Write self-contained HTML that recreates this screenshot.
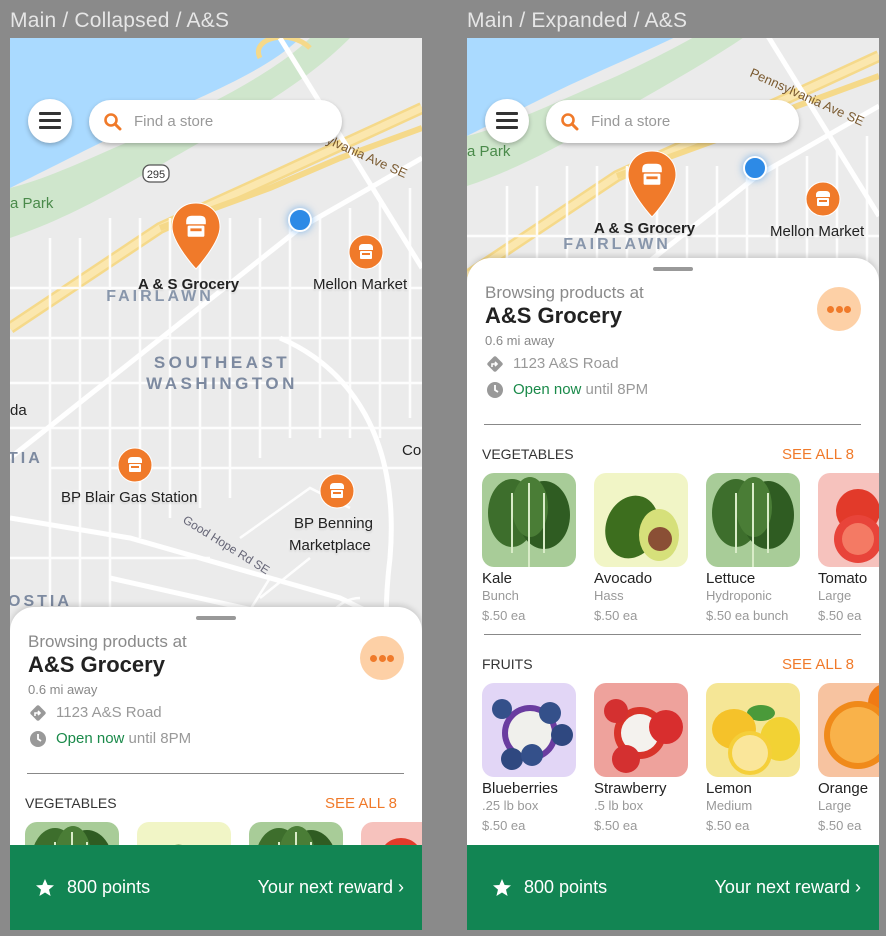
<!DOCTYPE html>
<html><head><meta charset="utf-8">
<style>
*{box-sizing:border-box;margin:0;padding:0}
body{width:886px;height:936px;background:#8a8a8a;font-family:"Liberation Sans",sans-serif;position:relative;overflow:hidden}
.title{position:absolute;top:9px;font-size:21px;color:#e6e6e6;letter-spacing:0.2px}
.frame{position:absolute;top:38px;width:412px;height:892px;overflow:hidden;background:#ebebeb}
.map{position:absolute;left:0;width:412px;height:944px}
.menu{position:absolute;left:18px;top:61px;width:44px;height:44px;border-radius:50%;background:#fff;box-shadow:0 2px 5px rgba(0,0,0,.25)}
.menu i{position:absolute;left:11px;width:22px;height:3px;background:#333;border-radius:1px}
.search{position:absolute;left:79px;top:62px;width:253px;height:43px;border-radius:22px;background:#fff;box-shadow:0 2px 5px rgba(0,0,0,.25);font-size:15px;color:#999;padding:13px 0 0 45px}
.search svg{position:absolute;left:14px;top:12px}
.lbl{position:absolute;font-size:15px;color:#222;text-shadow:0 0 3px #fff,0 0 3px #fff,0 1px 2px rgba(0,0,0,.3);white-space:nowrap}
.sheet{position:absolute;left:0;width:412px;background:#fff;border-radius:24px 24px 0 0;box-shadow:0 -2px 6px rgba(0,0,0,.15);overflow:hidden}
.handle{position:absolute;left:186px;top:9px;width:40px;height:4px;border-radius:2px;background:#999}
.t1{position:absolute;left:18px;top:25px;font-size:17px;color:#8a8a8a}
.t2{position:absolute;left:18px;top:45px;font-size:22px;color:#222;font-weight:bold}
.t3{position:absolute;left:18px;top:75px;font-size:13px;color:#888}
.t4{position:absolute;left:46px;top:97px;font-size:15px;color:#999}
.t5{position:absolute;left:46px;top:123px;font-size:15px;color:#999}
.t5 b{font-weight:normal;color:#1a8a4a}
.ico{position:absolute;left:19px}
.more{position:absolute;left:350px;top:29px;width:44px;height:44px;border-radius:50%;background:#fdd0a6}
.more i{position:absolute;top:19px;width:7px;height:7px;border-radius:50%;background:#f07a2a}
.div{position:absolute;left:17px;width:377px;height:1px;background:#888}
.sec{position:absolute;left:15px;font-size:14px;color:#333}
.see{position:absolute;right:25px;font-size:15px;color:#f07a2a}
.card{position:absolute;width:110px}
.card svg{display:block;border-radius:12px}
.card .n{font-size:15px;color:#222;margin-top:3px;white-space:nowrap}
.card .s{font-size:13px;color:#999;margin-top:1px;white-space:nowrap}
.card .p{font-size:13px;color:#999;margin-top:5px;white-space:nowrap}
.foot{position:absolute;left:0;top:807px;width:412px;height:85px;background:#128553;color:#fff;font-size:18px}
.foot .a{position:absolute;left:57px;top:32px}
.foot .b{position:absolute;right:18px;top:32px}
.foot svg{position:absolute;left:25px;top:33px}
</style></head><body>
<svg width="0" height="0" style="position:absolute">
<defs>
<symbol id="map" viewBox="0 0 412 944">
<rect width="412" height="944" fill="#ebebeb"/>
<path d="M0 0H290C250 40 160 70 80 110 50 125 20 140 0 150Z" fill="#aadaff"/>
<path d="M0 150C40 140 80 120 150 90 210 62 270 30 300 0H340C300 40 250 70 180 110 110 150 60 180 0 200Z" fill="#cfe6cc"/>
<path d="M0 290L150 190 260 140 412 70" stroke="#f5d98a" stroke-width="12" fill="none"/>
<path d="M0 290L150 190 260 140 412 70" stroke="#fbe7ae" stroke-width="7" fill="none"/>
<path d="M150 190L260 150 330 120 412 90" stroke="#f5d98a" stroke-width="6" fill="none"/>
<path d="M250 20C240 0 280 -10 300 10" stroke="#f5d98a" stroke-width="5" fill="none"/>
<g stroke="#fff" stroke-width="5" fill="none">
<path d="M0 420L290 190 412 120"/><path d="M270 0L412 230"/><path d="M100 540L412 610"/><path d="M0 480L120 500 330 560 412 600"/>
<path d="M270 300C340 330 390 400 380 520 370 600 380 700 412 760"/><path d="M0 700L412 870"/>
</g>
<g stroke="#fff" stroke-width="2.5" fill="none" opacity="0.9">
<path d="M0 250H412M0 300H412M0 345H412M0 390H412M40 430H412M0 520H200M0 600H300M0 650H250"/>
<path d="M40 200V900M70 200V700M100 180V600M130 180V500M160 180V480M190 180V470M220 180V460M250 180V420M280 180V400M310 180V400M340 170V400M370 160V400M400 150V380"/>
<path d="M230 500L300 450 340 470M250 560L300 520M210 620L260 540M300 620C310 580 330 560 350 560M340 700C330 650 360 620 380 630"/>
</g>
<text x="212" y="330" text-anchor="middle" font-family="Liberation Sans" font-weight="bold" font-size="17" letter-spacing="3.5" fill="#7d8aa0">SOUTHEAST</text>
<text x="212" y="351" text-anchor="middle" font-family="Liberation Sans" font-weight="bold" font-size="17" letter-spacing="3.5" fill="#7d8aa0">WASHINGTON</text>
<text x="150" y="263" text-anchor="middle" font-family="Liberation Sans" font-weight="bold" font-size="16" letter-spacing="3" fill="#8896ab">FAIRLAWN</text>
<text x="-2" y="425" font-family="Liberation Sans" font-weight="bold" font-size="16" letter-spacing="3" fill="#7d8aa0">TIA</text>
<text x="-2" y="568" font-family="Liberation Sans" font-weight="bold" font-size="16" letter-spacing="3" fill="#7d8aa0">OSTIA</text>
<text x="0" y="170" font-family="Liberation Sans" font-size="15" fill="#4a8a4a">a Park</text>
<text x="0" y="377" font-family="Liberation Sans" font-size="15" fill="#222">da</text>
<text x="392" y="417" font-family="Liberation Sans" font-size="15" fill="#222">Co</text>
<text x="282" y="90" transform="rotate(24 282 90)" font-family="Liberation Sans" font-size="13" fill="#7a5a30">Pennsylvania Ave SE</text>
<text x="172" y="484" transform="rotate(32 172 484)" font-family="Liberation Sans" font-size="12" fill="#667">Good Hope Rd SE</text>
<rect x="133" y="127" width="26" height="17" rx="7" fill="#fff" stroke="#555" stroke-width="1.3"/>
<text x="146" y="140" text-anchor="middle" font-family="Liberation Sans" font-size="11" fill="#333">295</text>
</symbol>
<symbol id="shop" viewBox="0 0 20 20"><path d="M3 6Q3 2 7 2H13Q17 2 17 6V8H3Z" fill="#fff"/><rect x="4" y="9" width="12" height="8" rx="1" fill="#fff"/><rect x="6" y="11" width="8" height="2" fill="#f07a2a"/></symbol>
<symbol id="kale" viewBox="0 0 94 94"><rect width="94" height="94" fill="#a8cc98"/><ellipse cx="30" cy="40" rx="24" ry="34" fill="#3d6e2c"/><ellipse cx="62" cy="42" rx="26" ry="34" fill="#2f5c22"/><ellipse cx="48" cy="34" rx="18" ry="30" fill="#4a7d36"/><path d="M47 10V94M30 20V80M62 20V80" stroke="#d9ecc8" stroke-width="2"/></symbol>
<symbol id="avo" viewBox="0 0 94 94"><rect width="94" height="94" fill="#f1f5c6"/><ellipse cx="38" cy="54" rx="26" ry="32" fill="#3d6e1e" transform="rotate(20 38 54)"/><ellipse cx="65" cy="62" rx="20" ry="26" fill="#d6e07a"/><circle cx="66" cy="66" r="12" fill="#8a4f35"/></symbol>
<symbol id="tom" viewBox="0 0 94 94"><rect width="94" height="94" fill="#f6c2bd"/><circle cx="40" cy="38" r="22" fill="#e23a2a"/><circle cx="40" cy="66" r="24" fill="#e8443a"/><circle cx="40" cy="66" r="16" fill="#f47a64"/><circle cx="88" cy="50" r="18" fill="#d9302a"/></symbol>
<symbol id="blue" viewBox="0 0 94 94"><rect width="94" height="94" fill="#e2d6f6"/><circle cx="48" cy="50" r="28" fill="#6a3ca0"/><circle cx="48" cy="50" r="22" fill="#f0f0ec"/><circle cx="20" cy="26" r="10" fill="#34508a"/><circle cx="68" cy="30" r="11" fill="#34508a"/><circle cx="80" cy="52" r="11" fill="#2f4880"/><circle cx="30" cy="76" r="11" fill="#2f4880"/><circle cx="50" cy="72" r="11" fill="#34508a"/></symbol>
<symbol id="straw" viewBox="0 0 94 94"><rect width="94" height="94" fill="#eea29c"/><circle cx="46" cy="50" r="26" fill="#d8342a"/><circle cx="46" cy="50" r="19" fill="#f4f2ee"/><circle cx="22" cy="28" r="12" fill="#d43030"/><circle cx="72" cy="44" r="17" fill="#d82e2e"/><circle cx="32" cy="76" r="14" fill="#d43030"/></symbol>
<symbol id="lemon" viewBox="0 0 94 94"><rect width="94" height="94" fill="#f5e696"/><ellipse cx="55" cy="30" rx="14" ry="8" fill="#4a9a3a"/><ellipse cx="28" cy="46" rx="22" ry="20" fill="#f5c22a"/><ellipse cx="74" cy="56" rx="20" ry="22" fill="#f2d234"/><circle cx="44" cy="70" r="22" fill="#f5cf3a"/><circle cx="44" cy="70" r="18" fill="#fae69a"/></symbol>
<symbol id="orange" viewBox="0 0 94 94"><rect width="94" height="94" fill="#f7c3a0"/><circle cx="70" cy="20" r="20" fill="#f07a14"/><circle cx="40" cy="52" r="34" fill="#f08a1a"/><circle cx="40" cy="52" r="28" fill="#f9b24a"/></symbol>
</defs></svg>

<div class="title" style="left:10px">Main / Collapsed / A&amp;S</div>
<div class="title" style="left:467px">Main / Expanded / A&amp;S</div>

<!-- LEFT -->
<div class="frame" style="left:10px">
<svg class="map" style="top:0" width="412" height="944" viewBox="0 0 412 944"><use href="#map" x="0" y="0" width="412" height="944"/></svg>
<div style="position:absolute;left:278px;top:170px;width:24px;height:24px;border-radius:50%;background:#2d8ae6;border:2px solid #fff;box-shadow:0 0 8px rgba(45,138,230,.6)"></div>
<svg style="position:absolute;left:160px;top:163px" width="52" height="70" viewBox="0 0 52 70"><path d="M26 2C12 2 2 12 2 26 2 42 26 68 26 68S50 42 50 26C50 12 40 2 26 2Z" fill="#f07a2a" stroke="#fff" stroke-width="1"/><use href="#shop" x="12" y="12" width="28" height="28"/></svg>
<div class="lbl" style="left:128px;top:238px;font-weight:bold">A &amp; S Grocery</div>
<svg style="position:absolute;left:338px;top:196px" width="36" height="36"><circle cx="18" cy="18" r="17" fill="#f07a2a" stroke="#fff"/><use href="#shop" x="8" y="8" width="20" height="20"/></svg>
<div class="lbl" style="left:303px;top:238px">Mellon Market</div>
<svg style="position:absolute;left:107px;top:409px" width="36" height="36"><circle cx="18" cy="18" r="17" fill="#f07a2a" stroke="#fff"/><use href="#shop" x="8" y="8" width="20" height="20"/></svg>
<div class="lbl" style="left:51px;top:451px">BP Blair Gas Station</div>
<svg style="position:absolute;left:309px;top:435px" width="36" height="36"><circle cx="18" cy="18" r="17" fill="#f07a2a" stroke="#fff"/><use href="#shop" x="8" y="8" width="20" height="20"/></svg>
<div class="lbl" style="left:284px;top:477px">BP Benning</div>
<div class="lbl" style="left:279px;top:499px">Marketplace</div>
<div class="menu"><i style="top:13px"></i><i style="top:20px"></i><i style="top:27px"></i></div>
<div class="search"><svg width="20" height="20" viewBox="0 0 20 20"><circle cx="8" cy="8" r="5.5" stroke="#f07a2a" stroke-width="2.6" fill="none"/><path d="M12 12L17 17" stroke="#f07a2a" stroke-width="3" stroke-linecap="round"/></svg>Find a store</div>
<div class="sheet" style="top:569px;height:240px">
<div class="handle"></div>
<div class="t1">Browsing products at</div>
<div class="t2">A&amp;S Grocery</div>
<div class="t3">0.6 mi away</div>
<svg class="ico" style="top:97px" width="18" height="18" viewBox="0 0 18 18"><rect x="3" y="3" width="12" height="12" rx="2" transform="rotate(45 9 9)" fill="#999"/><path d="M6 12V9H11M9 7L11 9 9 11" stroke="#fff" stroke-width="1.6" fill="none"/></svg>
<div class="t4">1123 A&amp;S Road</div>
<svg class="ico" style="top:123px" width="18" height="18" viewBox="0 0 18 18"><circle cx="9" cy="9" r="8" fill="#999"/><path d="M9 4V9L12 11" stroke="#fff" stroke-width="1.8" fill="none"/></svg>
<div class="t5"><b>Open now</b> until 8PM</div>
<div class="more"><i style="left:10px"></i><i style="left:18.5px"></i><i style="left:27px"></i></div>
<div class="div" style="top:166px"></div>
<div class="sec" style="top:188px">VEGETABLES</div>
<div class="see" style="top:188px">SEE ALL 8</div>
<div class="card" style="left:15px;top:215px"><svg width="94" height="94"><use href="#kale"/></svg></div>
<div class="card" style="left:127px;top:215px"><svg width="94" height="94"><use href="#avo"/></svg></div>
<div class="card" style="left:239px;top:215px"><svg width="94" height="94"><use href="#kale"/></svg></div>
<div class="card" style="left:351px;top:215px"><svg width="94" height="94"><use href="#tom"/></svg></div>
</div>
<div class="foot"><svg width="20" height="20" viewBox="0 0 20 20"><path d="M10 1L12.6 7 19 7.4 14 11.6 15.6 18 10 14.5 4.4 18 6 11.6 1 7.4 7.4 7Z" fill="#fff"/></svg><span class="a">800 points</span><span class="b">Your next reward &#8250;</span></div>
</div>

<!-- RIGHT -->
<div class="frame" style="left:467px">
<svg class="map" style="top:-52px" width="412" height="944" viewBox="0 0 412 944"><use href="#map" x="0" y="0" width="412" height="944"/></svg>
<div style="position:absolute;left:276px;top:118px;width:24px;height:24px;border-radius:50%;background:#2d8ae6;border:2px solid #fff;box-shadow:0 0 8px rgba(45,138,230,.6)"></div>
<svg style="position:absolute;left:159px;top:111px" width="52" height="70" viewBox="0 0 52 70"><path d="M26 2C12 2 2 12 2 26 2 42 26 68 26 68S50 42 50 26C50 12 40 2 26 2Z" fill="#f07a2a" stroke="#fff" stroke-width="1"/><use href="#shop" x="12" y="12" width="28" height="28"/></svg>
<div class="lbl" style="left:127px;top:182px;font-weight:bold">A &amp; S Grocery</div>
<svg style="position:absolute;left:338px;top:143px" width="36" height="36"><circle cx="18" cy="18" r="17" fill="#f07a2a" stroke="#fff"/><use href="#shop" x="8" y="8" width="20" height="20"/></svg>
<div class="lbl" style="left:303px;top:185px">Mellon Market</div>
<div class="menu"><i style="top:13px"></i><i style="top:20px"></i><i style="top:27px"></i></div>
<div class="search"><svg width="20" height="20" viewBox="0 0 20 20"><circle cx="8" cy="8" r="5.5" stroke="#f07a2a" stroke-width="2.6" fill="none"/><path d="M12 12L17 17" stroke="#f07a2a" stroke-width="3" stroke-linecap="round"/></svg>Find a store</div>
<div class="sheet" style="top:220px;height:590px">
<div class="handle"></div>
<div class="t1">Browsing products at</div>
<div class="t2">A&amp;S Grocery</div>
<div class="t3">0.6 mi away</div>
<svg class="ico" style="top:97px" width="18" height="18" viewBox="0 0 18 18"><rect x="3" y="3" width="12" height="12" rx="2" transform="rotate(45 9 9)" fill="#999"/><path d="M6 12V9H11M9 7L11 9 9 11" stroke="#fff" stroke-width="1.6" fill="none"/></svg>
<div class="t4">1123 A&amp;S Road</div>
<svg class="ico" style="top:123px" width="18" height="18" viewBox="0 0 18 18"><circle cx="9" cy="9" r="8" fill="#999"/><path d="M9 4V9L12 11" stroke="#fff" stroke-width="1.8" fill="none"/></svg>
<div class="t5"><b>Open now</b> until 8PM</div>
<div class="more"><i style="left:10px"></i><i style="left:18.5px"></i><i style="left:27px"></i></div>
<div class="div" style="top:166px"></div>
<div class="sec" style="top:188px">VEGETABLES</div>
<div class="see" style="top:188px">SEE ALL 8</div>
<div class="card" style="left:15px;top:215px"><svg width="94" height="94"><use href="#kale"/></svg><div class="n">Kale</div><div class="s">Bunch</div><div class="p">$.50 ea</div></div>
<div class="card" style="left:127px;top:215px"><svg width="94" height="94"><use href="#avo"/></svg><div class="n">Avocado</div><div class="s">Hass</div><div class="p">$.50 ea</div></div>
<div class="card" style="left:239px;top:215px"><svg width="94" height="94"><use href="#kale"/></svg><div class="n">Lettuce</div><div class="s">Hydroponic</div><div class="p">$.50 ea bunch</div></div>
<div class="card" style="left:351px;top:215px"><svg width="94" height="94"><use href="#tom"/></svg><div class="n">Tomato</div><div class="s">Large</div><div class="p">$.50 ea</div></div>
<div class="div" style="top:376px"></div>
<div class="sec" style="top:398px">FRUITS</div>
<div class="see" style="top:398px">SEE ALL 8</div>
<div class="card" style="left:15px;top:425px"><svg width="94" height="94"><use href="#blue"/></svg><div class="n">Blueberries</div><div class="s">.25 lb box</div><div class="p">$.50 ea</div></div>
<div class="card" style="left:127px;top:425px"><svg width="94" height="94"><use href="#straw"/></svg><div class="n">Strawberry</div><div class="s">.5 lb box</div><div class="p">$.50 ea</div></div>
<div class="card" style="left:239px;top:425px"><svg width="94" height="94"><use href="#lemon"/></svg><div class="n">Lemon</div><div class="s">Medium</div><div class="p">$.50 ea</div></div>
<div class="card" style="left:351px;top:425px"><svg width="94" height="94"><use href="#orange"/></svg><div class="n">Orange</div><div class="s">Large</div><div class="p">$.50 ea</div></div>
</div>
<div class="foot"><svg width="20" height="20" viewBox="0 0 20 20"><path d="M10 1L12.6 7 19 7.4 14 11.6 15.6 18 10 14.5 4.4 18 6 11.6 1 7.4 7.4 7Z" fill="#fff"/></svg><span class="a">800 points</span><span class="b">Your next reward &#8250;</span></div>
</div>
</body></html>
